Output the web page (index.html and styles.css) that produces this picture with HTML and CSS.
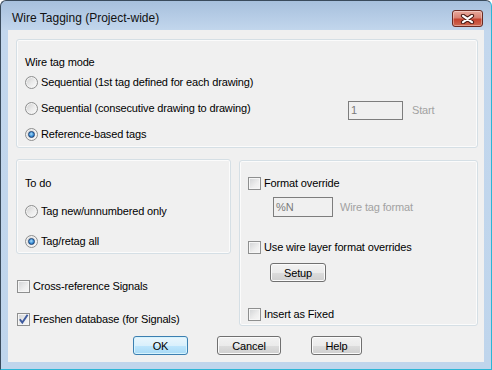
FILE: index.html
```html
<!DOCTYPE html>
<html>
<head>
<meta charset="utf-8">
<title>Wire Tagging (Project-wide)</title>
<link rel="stylesheet" href="styles.css">
</head>
<body>
<div class="window">
  <div class="titlebar">
    <span class="title">Wire Tagging (Project-wide)</span>
    <button class="close" aria-label="Close">
      <svg width="15" height="10" viewBox="0 0 15 10">
        <path d="M3 1.8 L12 8.2 M12 1.8 L3 8.2" stroke="#4a1c16" stroke-width="4.2" stroke-linecap="round" fill="none"/>
        <path d="M3 1.8 L12 8.2 M12 1.8 L3 8.2" stroke="#ffffff" stroke-width="2.2" stroke-linecap="round" fill="none"/>
      </svg>
    </button>
  </div>
  <div class="client">
    <div class="group g-mode">
      <div class="caption">Wire tag mode</div>
      <div class="opt first"><span class="radio"></span><span>Sequential (1st tag defined for each drawing)</span></div>
      <div class="opt next opt-start">
        <div class="opt-main"><span class="radio"></span><span>Sequential (consecutive drawing to drawing)</span></div>
        <span class="field f-start">1</span>
        <span class="dim start-label">Start</span>
      </div>
      <div class="opt next"><span class="radio on"></span><span>Reference-based tags</span></div>
    </div>

    <div class="middle">
      <div class="left">
        <div class="group g-todo">
          <div class="caption">To do</div>
          <div class="opt todo-1"><span class="radio"></span><span>Tag new/unnumbered only</span></div>
          <div class="opt todo-2"><span class="radio on"></span><span>Tag/retag all</span></div>
        </div>
        <div class="opt xref"><span class="check"></span><span>Cross-reference Signals</span></div>
        <div class="opt fresh"><span class="check on"><svg width="11" height="11" viewBox="0 0 11 11"><path d="M1.8 5.2 L4.3 8.6 L9.6 0.8" stroke="#3d5a9e" stroke-width="1.9" fill="none"/></svg></span><span>Freshen database (for Signals)</span></div>
      </div>

      <div class="group g-format">
        <div class="opt"><span class="check"></span><span>Format override</span></div>
        <div class="field-row">
          <span class="field f-format">%N</span>
          <span class="dim">Wire tag format</span>
        </div>
        <div class="opt layer"><span class="check"></span><span>Use wire layer format overrides</span></div>
        <button class="btn setup">Setup</button>
        <div class="opt fixed"><span class="check"></span><span>Insert as Fixed</span></div>
      </div>
    </div>

    <div class="buttons">
      <button class="btn default b-ok">OK</button>
      <button class="btn b-cancel">Cancel</button>
      <button class="btn b-help">Help</button>
    </div>
  </div>
</div>
</body>
</html>
```

FILE: styles.css
```css
body {
  margin: 0;
  background: #ffffff;
  font-family: "Liberation Sans", Arial, sans-serif;
  font-size: 11px;
  letter-spacing: -0.15px;
  color: #000000;
}

.window {
  width: 492px;
  height: 370px;
  box-sizing: border-box;
  border: 1px solid;
  border-color: #3a4b5c #2bb6d6 #2bb6d6 #3a4b5c;
  border-radius: 6px 6px 0 0;
  background: linear-gradient(#a7c0dd 0, #c3d7ed 30px, #bfd5ec 100%);
  display: flex;
  flex-direction: column;
  padding: 0 7px 7px 7px;
}

.titlebar {
  height: 29px;
  box-sizing: border-box;
  padding: 6px 1px 0 4px;
  display: flex;
  align-items: center;
}

.title {
  font-family: "Liberation Sans", Arial, sans-serif;
  font-size: 12px;
  letter-spacing: 0;
  line-height: 15px;
  color: #111111;
}

.close {
  margin-left: auto;
  width: 31px;
  height: 17px;
  box-sizing: border-box;
  padding: 0;
  border: 1px solid #6a2a22;
  border-radius: 3px;
  background: linear-gradient(#e9aa9d 0%, #d98273 45%, #c5432f 55%, #cf6a52 100%);
  box-shadow: inset 0 0 0 1px rgba(255, 255, 255, 0.35);
  display: flex;
  align-items: center;
  justify-content: center;
}

.client {
  flex: 1;
  background: #f0f0f0;
  padding: 9px 6px 0 8px;
  display: flex;
  flex-direction: column;
}

.group {
  box-sizing: border-box;
  border: 1px solid #d5dfe5;
  border-radius: 3px;
  box-shadow: inset 0 0 0 1px #fbfbfb;
  display: flex;
  flex-direction: column;
}

.caption {
  height: 13px;
  line-height: 13px;
}

.opt {
  display: flex;
  align-items: center;
  gap: 3px;
  height: 16px;
  white-space: nowrap;
}

/* Wire tag mode */
.g-mode {
  height: 109px;
  padding: 16px 0 0 8px;
}

.g-mode .first {
  margin-top: 5px;
}

.g-mode .next {
  margin-top: 10px;
}

.opt-start {
  gap: 0;
  align-items: flex-start;
}

.opt-main {
  width: 323px;
  height: 16px;
  flex: none;
  display: flex;
  align-items: center;
  gap: 3px;
}

.field {
  box-sizing: border-box;
  border: 1px solid #7d7d7d;
  color: #7a7a7a;
  padding-left: 2px;
  flex: none;
}

.f-start {
  width: 55px;
  height: 19px;
  line-height: 17px;
  margin-top: 1px;
}

.dim {
  color: #a2a2a2;
}

.start-label {
  margin-left: 9px;
  line-height: 19px;
  margin-top: 1px;
}

/* middle */
.middle {
  display: flex;
  gap: 8px;
  margin-top: 11px;
}

.left {
  width: 215px;
  display: flex;
  flex-direction: column;
}

.g-todo {
  height: 95px;
  padding: 17px 0 0 8px;
}

.todo-1 {
  margin-top: 13px;
}

.todo-2 {
  margin-top: 14px;
}

.xref {
  margin-top: 24px;
  padding-left: 1px;
}

.fresh {
  margin-top: 17px;
  padding-left: 1px;
}

.g-format {
  width: 239px;
  height: 166px;
  margin-top: 1px;
  padding: 14px 0 0 8px;
}

.field-row {
  display: flex;
  align-items: center;
  height: 20px;
  margin: 6px 0 0 25px;
}

.f-format {
  width: 60px;
  height: 20px;
  line-height: 18px;
  margin-right: 7px;
}

.layer {
  margin-top: 22px;
}

.fixed {
  margin-top: 24px;
}

/* radio + check */
.radio {
  position: relative;
  flex: none;
  width: 13px;
  height: 13px;
  box-sizing: border-box;
  border-radius: 50%;
  border: 1px solid #8e8f8f;
  background: linear-gradient(135deg, #cdcdcd 0%, #ececec 55%, #fbfbfb 100%);
  box-shadow: inset 0 0 0 1px #f3f3f3;
}

.radio.on::after {
  content: "";
  position: absolute;
  left: 2px;
  top: 2px;
  width: 7px;
  height: 7px;
  box-sizing: border-box;
  border-radius: 50%;
  border: 1px solid #1b3f72;
  background: radial-gradient(circle at 45% 40%, #a9dcfb 0%, #3b8fd6 55%, #1d5fa4 100%);
}

.check {
  flex: none;
  width: 13px;
  height: 13px;
  box-sizing: border-box;
  border: 1px solid #8e8f8f;
  background: linear-gradient(135deg, #d0d2d4 0%, #eeeeee 60%, #f7f7f7 100%);
  box-shadow: inset 0 0 0 1px #f6f6f6;
  display: flex;
  align-items: center;
  justify-content: center;
}

.check svg {
  display: block;
}

/* buttons */
.btn {
  box-sizing: border-box;
  height: 19px;
  padding: 0;
  border: 1px solid #707070;
  border-radius: 3px;
  background: linear-gradient(#f2f2f2 0%, #ebebeb 50%, #dddddd 50%, #cfcfcf 100%);
  box-shadow: inset 0 0 0 1px #fbfbfb;
  font-family: inherit;
  font-size: 11px;
  letter-spacing: -0.15px;
  color: #000000;
  display: flex;
  align-items: center;
  justify-content: center;
  flex: none;
}

.btn.default {
  border-color: #3c7fb1;
  background: linear-gradient(#eaf6fd 0%, #d9f0fc 50%, #bee6fd 50%, #a7d9f5 100%);
  box-shadow: inset 0 0 0 1px #d6f3fd;
}

.setup {
  width: 56px;
  margin: 8px 0 0 22px;
}

.buttons {
  display: flex;
  margin-top: 9px;
  padding-left: 117px;
}

.b-ok {
  width: 55px;
}

.b-cancel {
  width: 64px;
  margin-left: 29px;
}

.b-help {
  width: 51px;
  margin-left: 30px;
}
```
